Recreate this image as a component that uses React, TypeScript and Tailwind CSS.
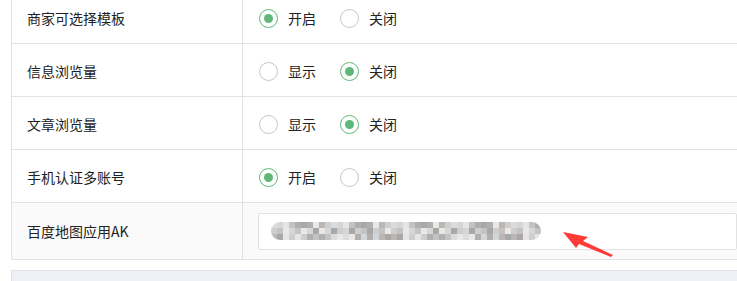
import React from "react";

const ROWS: { label: string; options: string[]; checked: number }[] = [
  { label: "商家可选择模板", options: ["开启", "关闭"], checked: 0 },
  { label: "信息浏览量", options: ["显示", "关闭"], checked: 1 },
  { label: "文章浏览量", options: ["显示", "关闭"], checked: 1 },
  { label: "手机认证多账号", options: ["开启", "关闭"], checked: 0 },
];

// mosaic colours for the blurred AK value
const GRAYS = ["#d9d9d9", "#bdbdbd", "#a8a8a8", "#c9c9c9", "#e3e3e3", "#9f9f9f", "#b5b0ac", "#cfd3d6", "#aaa6a2", "#e8e6e2"];

function Radio({ on, label }: { on: boolean; label: string }) {
  return (
    <label className="flex items-center mr-[24px] last:mr-0">
      <span
        className={`flex h-[19px] w-[19px] items-center justify-center rounded-full border-[1.5px] ${on ? "border-[#5fb878]" : "border-[#c7c7c7]"}`}
      >
        {on && <span className="h-[9px] w-[9px] rounded-full bg-[#5fb878]" />}
      </span>
      <span className="ml-[10px] text-[14px] text-[#222]">{label}</span>
    </label>
  );
}

function Mosaic() {
  const cols = 45;
  return (
    <div className="flex h-[18px] w-[270px] flex-col overflow-hidden rounded-full opacity-90">
      {[0, 1, 2].map((r) => (
        <div key={r} className="flex h-[6px]">
          {Array.from({ length: cols }).map((_, c) => (
            <div
              key={c}
              className="h-[6px] w-[6px]"
              style={{ background: GRAYS[(c * 7 + r * 3 + (c % 4) * r) % GRAYS.length] }}
            />
          ))}
        </div>
      ))}
    </div>
  );
}

export default function App() {
  return (
    <div
      className="relative h-[281px] w-[737px] overflow-hidden bg-white text-[#222]"
      style={{ fontFamily: '"Noto Sans CJK SC", "Noto Sans", sans-serif' }}
    >
      <div className="ml-[11px] -mt-[9px] border-l border-[#e2e2e2]">
        {ROWS.map((row) => (
          <div key={row.label} className="flex h-[53px] border-b border-[#e2e2e2]">
            <div className="flex w-[231px] items-center border-r border-[#e2e2e2] pl-[15px] pt-[3px] text-[14px]">
              {row.label}
            </div>
            <div className="flex flex-1 items-center pl-[16px] pt-[3px]">
              {row.options.map((o, i) => (
                <Radio key={o + i} on={i === row.checked} label={o} />
              ))}
            </div>
          </div>
        ))}
        <div className="flex h-[57px] border-b border-[#e2e2e2] bg-[#fafafa]">
          <div className="flex w-[231px] items-center border-r border-[#e2e2e2] pl-[15px] text-[14px]">
            百度地图应用AK
          </div>
          <div className="flex flex-1 items-center pl-[15px]">
            <div className="flex h-[37px] flex-1 items-center rounded-[2px] border border-[#e2e2e2] bg-white pl-[12px]">
              <Mosaic />
            </div>
          </div>
        </div>
      </div>
      <div className="ml-[11px] mt-[10px] h-[20px] border-l border-t border-[#dde2e7] bg-[#edf1f5]" />

      {/* annotation arrow */}
      <svg className="absolute left-0 top-0" width="737" height="281" viewBox="0 0 737 281">
        <polygon points="563,232 588,237 583,241 613,255 611,257 579,244 576,248" fill="#ff3b36" />
      </svg>
    </div>
  );
}
